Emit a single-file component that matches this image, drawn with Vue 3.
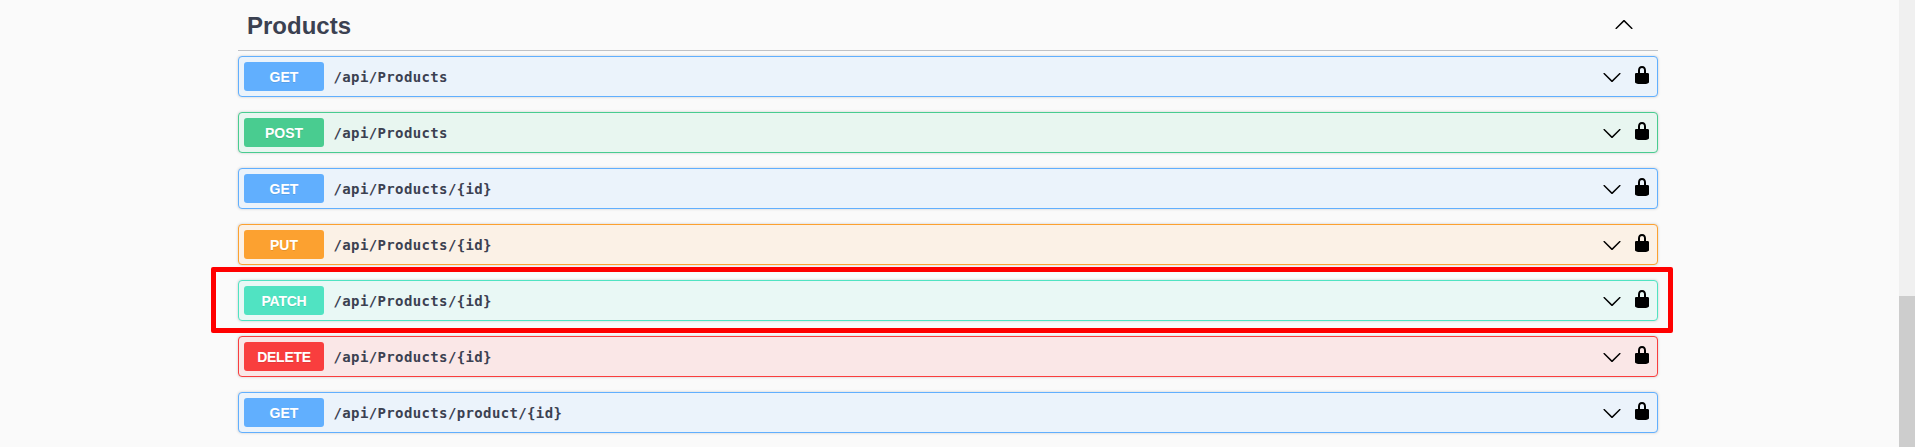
<script setup>
const operations = [
  { method: 'get', path: '/api/Products' },
  { method: 'post', path: '/api/Products' },
  { method: 'get', path: '/api/Products/{id}' },
  { method: 'put', path: '/api/Products/{id}' },
  { method: 'patch', path: '/api/Products/{id}', marked: true },
  { method: 'delete', path: '/api/Products/{id}' },
  { method: 'get', path: '/api/Products/product/{id}' },
]
</script>

<template>
  <div class="page">
    <main class="section">
      <header class="tag">
        <h3>Products</h3>
        <svg class="icon" viewBox="0 0 20 20">
          <path d="M17.418 14.908c.272.268.709.268.979 0s.271-.701 0-.969l-7.908-7.83c-.27-.268-.707-.268-.979 0l-7.908 7.83c-.27.268-.27.701 0 .969.271.268.709.268.979 0L10 7.767l7.418 7.141z" />
        </svg>
      </header>
      <div class="operations">
        <div v-for="(op, i) in operations" :key="i" class="operation" :class="op.method">
          <span class="method">{{ op.method.toUpperCase() }}</span>
          <span class="path">{{ op.path }}</span>
          <svg class="icon" viewBox="0 0 20 20">
            <path d="M17.418 6.109c.272-.268.709-.268.979 0s.271.701 0 .969l-7.908 7.83c-.27.268-.707.268-.979 0l-7.908-7.83c-.27-.268-.27-.701 0-.969.271-.268.709-.268.979 0L10 13.25l7.418-7.141z" />
          </svg>
          <svg class="icon lock" viewBox="0 0 20 20">
            <path d="M15.8 8H14V5.6C14 2.703 12.665 1 10 1 7.334 1 6 2.703 6 5.6V8H4c-.553 0-1 .646-1 1.199V17c0 .549.428 1.139.951 1.307l1.197.387C5.672 18.861 6.55 19 7.1 19h5.8c.549 0 1.428-.139 1.951-.307l1.196-.387c.524-.167.953-.757.953-1.306V9.199C17 8.646 16.352 8 15.8 8zM12 8H8V5.199C8 3.754 8.797 3 10 3c1.203 0 2 .754 2 2.199V8z" />
          </svg>
          <div v-if="op.marked" class="marker"></div>
        </div>
      </div>
    </main>
    <div class="scrollbar"><div class="thumb"></div></div>
  </div>
</template>

<style>
body {
  margin: 0;
}
</style>

<style scoped>
.page {
  display: flex;
  height: 447px;
  overflow: hidden;
  background: #fafafa;
  color: #3b4151;
  font-family: "Liberation Sans", Arial, sans-serif;
}
.section {
  width: 1420px;
  margin-left: 238px;
}
.tag {
  display: flex;
  align-items: center;
  justify-content: space-between;
  box-sizing: border-box;
  height: 51px;
  padding: 0 24px 2px 9px;
  border-bottom: 1px solid rgba(59, 65, 81, 0.3);
}
.tag h3 {
  margin: 4px 0 0;
  font-size: 24px;
  line-height: 28px;
}
.operations {
  display: flex;
  flex-direction: column;
  gap: 15px;
  padding-top: 5px;
}
.operation {
  position: relative;
  display: flex;
  align-items: center;
  box-sizing: border-box;
  height: 41px;
  padding: 5px;
  border: 1px solid var(--accent);
  border-radius: 4px;
  background: var(--tint);
  box-shadow: 0 0 3px rgba(0, 0, 0, 0.19);
}
.method {
  width: 80px;
  height: 29px;
  border-radius: 3px;
  background: var(--accent);
  color: #fff;
  font-size: 14px;
  font-weight: 700;
  line-height: 30px;
  text-align: center;
  text-shadow: 0 1px 0 rgba(0, 0, 0, 0.1);
}
.patch .method,
.delete .method {
  letter-spacing: -0.25px;
}
.path {
  flex: 1;
  padding-left: 9.5px;
  font-family: "DejaVu Sans Mono", monospace;
  font-size: 14px;
  font-weight: 700;
  letter-spacing: 0.37px;
  line-height: 20px;
}
.icon {
  display: block;
  width: 20px;
  height: 20px;
  fill: #000;
}
.lock {
  margin: -3px 0 0 10px;
}
.get {
  --accent: #61affe;
  --tint: #ebf3fb;
}
.post {
  --accent: #49cc90;
  --tint: #e8f6f0;
}
.put {
  --accent: #fca130;
  --tint: #fbf1e6;
}
.patch {
  --accent: #50e3c2;
  --tint: #e9f8f5;
}
.delete {
  --accent: #f93e3e;
  --tint: #fae7e7;
}
.marker {
  position: absolute;
  inset: -14px -16px -13px -28px;
  border: 5px solid #f00;
  border-radius: 2px;
}
.scrollbar {
  width: 16px;
  margin-left: auto;
  background: #f0f0f0;
}
.thumb {
  height: 151px;
  margin-top: 296px;
  background: #cdcdcd;
}
</style>
